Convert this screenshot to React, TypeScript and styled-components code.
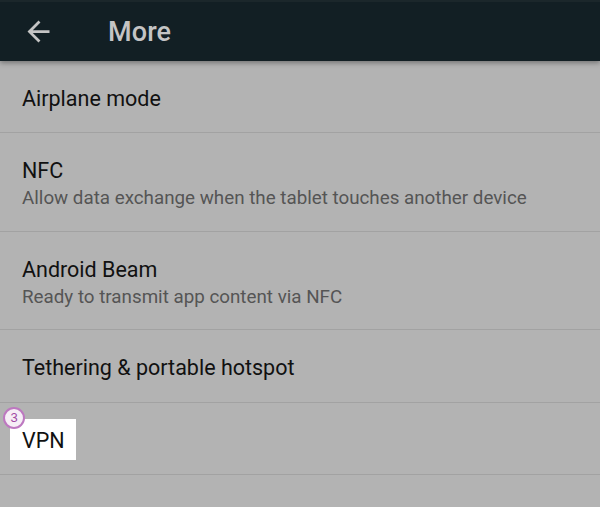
import React from "react";
import styled, { createGlobalStyle } from "styled-components";

const Global = createGlobalStyle`
  html, body { margin: 0; padding: 0; }
  body { background: #b3b3b3; font-family: Roboto, "Noto Sans", sans-serif; overflow: hidden; }
`;

const Page = styled.div`
  width: 600px;
  height: 507px;
  background: #b3b3b3;
  display: flex;
  flex-direction: column;
  position: relative;
  overflow: hidden;
`;

const AppBar = styled.header`
  height: 61px;
  flex: none;
  background: #121f24;
  border-top: 2px solid #1b272b;
  box-sizing: border-box;
  display: flex;
  align-items: center;
  box-shadow: 0 2px 5px rgba(0, 0, 0, 0.35);
  position: relative;
  z-index: 1;
`;

const BackButton = styled.div`
  width: 33px;
  height: 33px;
  margin-left: 22px;
  display: flex;
  align-items: center;
  justify-content: center;
`;

const Title = styled.h1`
  margin: 0 0 0 53px;
  font-size: 27px;
  font-weight: 500;
  color: #c4c4c4;
  letter-spacing: 0.1px;
`;

const List = styled.div`
  display: flex;
  flex-direction: column;
`;

const Row = styled.div<{ $h: number; $top?: boolean }>`
  height: ${(p) => p.$h}px;
  box-sizing: border-box;
  border-bottom: 1px solid #a2a2a2;
  display: flex;
  flex-direction: column;
  justify-content: ${(p) => (p.$top ? "flex-start" : "center")};
  padding: ${(p) => (p.$top ? "0" : "4px")} 0 0 22px;
  position: relative;
`;

const Primary = styled.div`
  font-size: 21.5px;
  color: #111111;
  line-height: 28px;
`;

const Secondary = styled.div`
  font-size: 18.8px;
  color: #555555;
  line-height: 25px;
  margin-top: 1px;
`;

const Highlight = styled.div`
  background: #ffffff;
  align-self: flex-start;
  margin-left: -12px;
  margin-top: 16px;
  padding: 2px 11px 0 12px;
  height: 41px;
  box-sizing: border-box;
  display: flex;
  align-items: center;
  font-size: 21.5px;
  color: #111111;
`;

const Badge = styled.div`
  position: absolute;
  left: 3px;
  top: 4px;
  width: 18px;
  height: 18px;
  border: 2px solid #bd78c0;
  border-radius: 50%;
  background: #f6eef6;
  color: #a04aa4;
  font-size: 13px;
  line-height: 18px;
  text-align: center;
  font-family: "Liberation Sans", Arial, sans-serif;
  z-index: 2;
`;

export default function App() {
  return (
    <Page>
      <Global />
      <AppBar>
        <BackButton>
          <svg width="33" height="33" viewBox="0 0 24 24">
            <path d="M20 11H7.83l5.59-5.59L12 4l-8 8 8 8 1.41-1.41L7.83 13H20v-2z" fill="#c4c4c4" />
          </svg>
        </BackButton>
        <Title>More</Title>
      </AppBar>
      <List>
        <Row $h={72}>
          <Primary>Airplane mode</Primary>
        </Row>
        <Row $h={99}>
          <Primary>NFC</Primary>
          <Secondary>Allow data exchange when the tablet touches another device</Secondary>
        </Row>
        <Row $h={98}>
          <Primary>Android Beam</Primary>
          <Secondary>Ready to transmit app content via NFC</Secondary>
        </Row>
        <Row $h={73}>
          <Primary>Tethering &amp; portable hotspot</Primary>
        </Row>
        <Row $h={72} $top>
          <Badge>3</Badge>
          <Highlight>VPN</Highlight>
        </Row>
      </List>
    </Page>
  );
}
